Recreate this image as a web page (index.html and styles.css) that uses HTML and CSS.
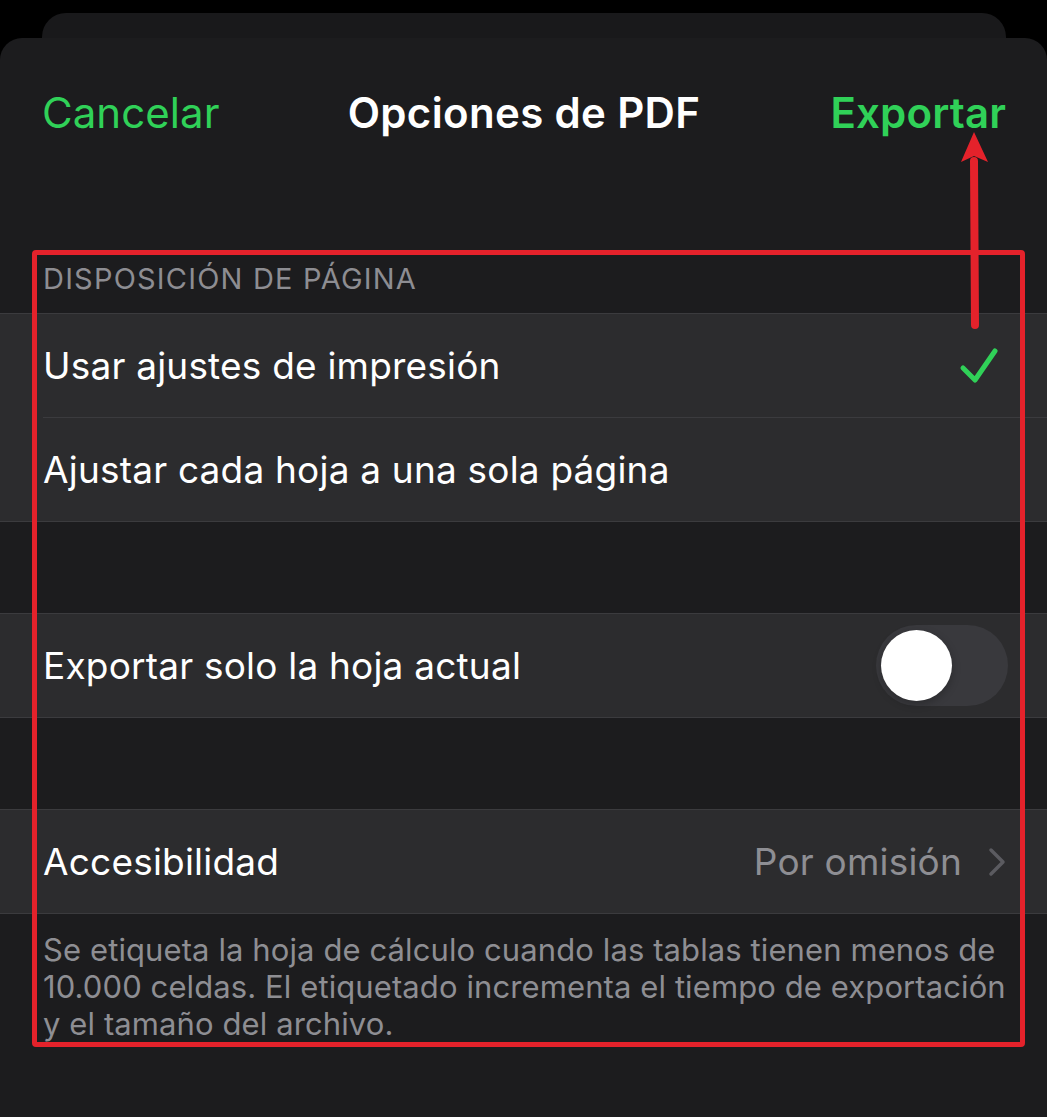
FILE: index.html
```html
<!DOCTYPE html>
<html lang="es">
<head>
<meta charset="utf-8">
<title>Opciones de PDF</title>
<link rel="stylesheet" href="styles.css">
</head>
<body>
<div class="back-card"></div>
<div class="sheet">
  <header class="nav">
    <span class="nav-btn nav-cancel">Cancelar</span>
    <span class="nav-title">Opciones de PDF</span>
    <span class="nav-btn nav-export">Exportar</span>
  </header>

  <div class="section-header">Disposición de página</div>
  <div class="group">
    <div class="row">
      <span class="label">Usar ajustes de impresión</span>
      <svg class="check" width="40" height="40" viewBox="0 0 40 40"><polyline points="4,22 16,34 36,5" fill="none" stroke="#30d158" stroke-width="5" stroke-linecap="round" stroke-linejoin="round"/></svg>
    </div>
    <div class="row">
      <span class="label">Ajustar cada hoja a una sola página</span>
    </div>
  </div>

  <div class="group group-spaced">
    <div class="row">
      <span class="label">Exportar solo la hoja actual</span>
      <span class="toggle"><span class="knob"></span></span>
    </div>
  </div>

  <div class="group group-spaced">
    <div class="row">
      <span class="label">Accesibilidad</span>
      <span class="value">Por omisión</span>
      <svg class="chevron" width="18" height="30" viewBox="0 0 18 30"><polyline points="3,3 15,15 3,27" fill="none" stroke="#5b5b60" stroke-width="3.5" stroke-linecap="round" stroke-linejoin="round"/></svg>
    </div>
  </div>
  <p class="footer">Se etiqueta la hoja de cálculo cuando las tablas tienen menos de<br>10.000 celdas. El etiquetado incrementa el tiempo de exportación<br>y el tamaño del archivo.</p>
</div>

<div class="annot-box"></div>
<svg class="annot-arrow" width="40" height="210" viewBox="0 0 40 210">
  <line x1="19" y1="30" x2="20" y2="194" stroke="#e4222b" stroke-width="8" stroke-linecap="round"/>
  <polygon points="19,1 6,31 19,25 33,31" fill="#e4222b"/>
</svg>
</body>
</html>
```
FILE: styles.css
```css
html, body {
  margin: 0;
  padding: 0;
}
body {
  background: #000;
  width: 1047px;
  height: 1117px;
  overflow: hidden;
  position: relative;
  font-family: Inter, "Noto Sans", "Liberation Sans", sans-serif;
  color: #fff;
}
.back-card {
  margin: 13px 41px 0 42px;
  height: 25px;
  background: #19191b;
  border-radius: 24px 24px 0 0;
}
.sheet {
  background: #1c1c1e;
  border-radius: 22px 22px 0 0;
  height: 1079px;
}
.nav {
  height: 150px;
  display: grid;
  grid-template-columns: 1fr auto 1fr;
  align-items: center;
  padding: 0 41px 0 42px;
  font-size: 42px;
  line-height: 1;
}
.nav-btn {
  color: #30d158;
}
.nav-cancel {
  justify-self: start;
  font-weight: 400;
  letter-spacing: 0.05px;
}
.nav-title {
  font-weight: 600;
  letter-spacing: 0.35px;
}
.nav-export {
  justify-self: end;
  font-weight: 600;
  letter-spacing: 0.15px;
}
.section-header {
  margin: 76px 0 20px;
  padding-left: 43px;
  height: 29px;
  font-size: 29px;
  line-height: 1;
  text-transform: uppercase;
  color: #8d8d92;
  letter-spacing: 1.2px;
}
.group {
  background: #2c2c2e;
  border-top: 1px solid #3b3b3e;
  border-bottom: 1px solid #3b3b3e;
  padding-left: 43px;
}
.group-spaced {
  margin-top: 91px;
}
.row {
  height: 103px;
  display: flex;
  align-items: center;
  padding-right: 39px;
  font-size: 37px;
  line-height: 1;
  letter-spacing: 0.2px;
}
.row + .row {
  border-top: 1px solid #3b3b3e;
}
.label {
  flex: 1;
  white-space: nowrap;
}
.check {
  margin-right: 9px;
}
.value {
  color: #8e8e93;
  margin-right: 26px;
}
.chevron {
  margin-right: 2px;
}
.toggle {
  width: 132px;
  height: 81px;
  border-radius: 41px;
  background: #39393d;
  display: flex;
  align-items: center;
  padding-left: 5px;
  box-sizing: border-box;
}
.knob {
  width: 71px;
  height: 71px;
  border-radius: 50%;
  background: #fff;
  box-shadow: 0 3px 8px rgba(0, 0, 0, 0.25);
}
.footer {
  margin: 17px 0 0;
  padding-left: 43px;
  font-size: 31px;
  line-height: 37px;
  color: #8e8e93;
  white-space: nowrap;
  letter-spacing: 0.1px;
}
.annot-box {
  position: absolute;
  left: 32px;
  top: 250px;
  width: 993px;
  height: 797px;
  box-sizing: border-box;
  border: 5px solid #e4222b;
  border-radius: 4px;
}
.annot-arrow {
  position: absolute;
  left: 955px;
  top: 131px;
}
```
